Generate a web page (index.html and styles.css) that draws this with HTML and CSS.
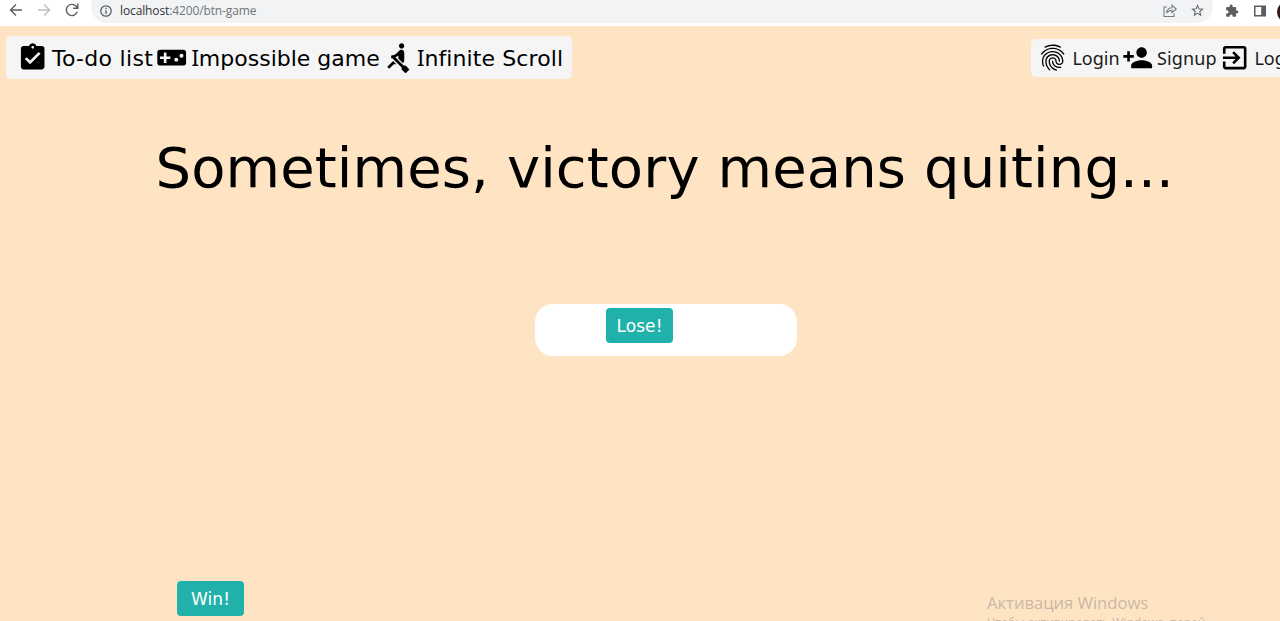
FILE: index.html
```html
<!DOCTYPE html>
<html lang="en">
<head>
<meta charset="utf-8">
<title>Impossible game</title>
<link rel="stylesheet" href="styles.css">
</head>
<body>
<div class="browser">
  <svg class="tool back" viewBox="0 0 16 16"><path d="M14 8H2.5M8 2.5L2.5 8L8 13.5"/></svg>
  <svg class="tool forward" viewBox="0 0 16 16"><path d="M2 8h11.500M8 2.500L13.500 8L8 13.500"/></svg>
  <svg class="tool reload" viewBox="0 0 16 16"><path d="M13.300 9.600A5.600 5.600 0 1 1 12 4.100L13.600 5.700M13.800 1.500v4.700H9.100"/></svg>
  <div class="address">
    <svg class="info" viewBox="0 0 14 14"><circle cx="7" cy="7" r="5.200"/><path d="M7 6.300v3.700M7 3.800v1.400"/></svg>
    <span class="url"><span class="host">localhost</span>:4200/btn-game</span>
    <svg class="share" viewBox="0 0 16 16"><path d="M5 4H2v9.500h10V10.500M4.500 10c.5-3.500 2.500-5.300 5.500-5.300V2.200L14.200 6L10 9.500V7.200C7.500 7.200 6 8 4.500 10z"/></svg>
    <svg class="star" viewBox="0 0 24 24"><path d="M22 9.240l-7.190-.62L12 2 9.190 8.630 2 9.240l5.460 4.730L5.820 21 12 17.270 18.180 21l-1.630-7.030L22 9.240zM12 15.400l-3.760 2.270 1-4.280-3.320-2.880 4.380-.38L12 6.100l1.710 4.040 4.380.38-3.320 2.880 1 4.280L12 15.400z"/></svg>
  </div>
  <svg class="puzzle" viewBox="0 0 24 24"><path d="M20.500 11H19V7c0-1.100-.9-2-2-2h-4V3.500a2.500 2.500 0 0 0-5 0V5H4c-1.100 0-2 .9-2 2v3.800h1.500a2.700 2.700 0 0 1 0 5.400H2V20c0 1.100.9 2 2 2h3.800v-1.500a2.700 2.700 0 0 1 5.400 0V22H17c1.100 0 2-.9 2-2v-4h1.500a2.500 2.500 0 0 0 0-5z"/></svg>
  <svg class="panel" viewBox="0 0 14 14"><path d="M1 1.500h12v11H1zM2.500 3v8h5.700V3z" fill-rule="evenodd"/></svg>
  <span class="avatar"></span>
</div>

<main class="page">
  <header class="header">
    <nav class="menu main-menu">
      <a class="link todo">
        <svg class="icon" viewBox="0 0 24 24"><path d="M19 3h-4.180C14.400 1.840 13.300 1 12 1c-1.300 0-2.400.84-2.820 2H5c-1.100 0-2 .9-2 2v14c0 1.100.9 2 2 2h14c1.100 0 2-.9 2-2V5c0-1.100-.9-2-2-2zm-7 0c.55 0 1 .45 1 1s-.45 1-1 1-1-.45-1-1 .45-1 1-1zm-2 14l-4-4 1.410-1.410L10 14.170l6.590-6.590L18 9l-8 8z"/></svg>
        <span class="label">To-do list</span>
      </a>
      <a class="link game">
        <svg class="icon" viewBox="0 0 24 24"><path d="M21 6H3c-1.100 0-2 .9-2 2v8c0 1.100.9 2 2 2h18c1.100 0 2-.9 2-2V8c0-1.100-.9-2-2-2zm-10 7H8v3H6v-3H3v-2h3V8h2v3h3v2zm4.500 2c-.83 0-1.500-.67-1.500-1.500s.67-1.500 1.500-1.500 1.500.67 1.500 1.500-.67 1.500-1.500 1.500zm4-3c-.83 0-1.500-.67-1.500-1.500S18.670 9 19.500 9s1.500.67 1.500 1.500-.67 1.500-1.500 1.500z"/></svg>
        <span class="label serif-cap">Impossible game</span>
      </a>
      <a class="link scroll">
        <svg class="icon" viewBox="0 0 24 24"><path d="M8.500 14.500L4 19l1.500 1.500L9 17h2l-2.500-2.500zM15 1c-1.100 0-2 .9-2 2s.9 2 2 2 2-.9 2-2-.9-2-2-2zm6 20.010L18 24l-2.990-3.010V19.500l-7.100-7.090c-.31.05-.61.07-.91.07v-2.160c1.660.03 3.610-.87 4.670-2.040l1.400-1.550c.19-.21.43-.38.69-.5.29-.14.62-.23.96-.23h.03C15.990 6.010 17 7.020 17 8.260v5.750c0 .84-.35 1.610-.92 2.160l-3.580-3.580v-2.270c-.63.52-1.430 1.020-2.290 1.390L16.500 18H18l3 3.010z"/></svg>
        <span class="label serif-cap">Infinite Scroll</span>
      </a>
    </nav>
    <nav class="menu user-menu">
      <a class="link login">
        <svg class="icon" viewBox="0 0 24 24"><path d="M17.810 4.470c-.08 0-.16-.02-.23-.06C15.660 3.420 14 3 12.010 3c-1.980 0-3.860.47-5.570 1.410-.24.13-.54.04-.68-.2-.13-.24-.04-.55.2-.68C7.820 2.520 9.860 2 12.010 2c2.130 0 3.990.47 6.030 1.520.25.13.34.43.21.67-.09.18-.26.28-.44.28zM3.500 9.720c-.1 0-.2-.03-.29-.09-.23-.16-.28-.47-.12-.7.99-1.400 2.250-2.500 3.750-3.270C9.980 4.040 14 4.030 17.150 5.650c1.500.77 2.760 1.860 3.750 3.250.16.22.11.54-.12.7-.23.16-.54.11-.7-.12-.9-1.260-2.040-2.250-3.390-2.940-2.870-1.470-6.540-1.470-9.400.01-1.360.7-2.500 1.700-3.400 2.960-.08.14-.23.21-.39.21zm6.250 12.070c-.13 0-.26-.05-.35-.15-.87-.87-1.340-1.430-2.010-2.640-.69-1.230-1.050-2.730-1.050-4.340 0-2.970 2.540-5.390 5.660-5.390s5.660 2.420 5.660 5.390c0 .28-.22.5-.5.5s-.5-.22-.5-.5c0-2.420-2.090-4.390-4.660-4.390-2.570 0-4.660 1.970-4.660 4.390 0 1.440.32 2.770.93 3.850.64 1.150 1.080 1.640 1.850 2.420.19.2.19.51 0 .71-.11.1-.24.15-.37.15zm7.170-1.850c-1.190 0-2.240-.3-3.100-.89-1.490-1.010-2.380-2.650-2.380-4.390 0-.28.22-.5.5-.5s.5.22.5.5c0 1.410.72 2.740 1.940 3.560.71.48 1.540.71 2.540.71.24 0 .64-.03 1.040-.1.27-.05.53.13.58.41.05.27-.13.53-.41.58-.57.11-1.070.12-1.210.12zM14.910 22c-.04 0-.09-.01-.13-.02-1.590-.44-2.630-1.030-3.720-2.100-1.400-1.390-2.170-3.240-2.170-5.220 0-1.620 1.380-2.940 3.080-2.940 1.700 0 3.080 1.320 3.080 2.940 0 1.070.93 1.940 2.080 1.940s2.080-.87 2.080-1.940c0-3.770-3.250-6.830-7.250-6.830-2.840 0-5.440 1.580-6.610 4.030-.39.81-.59 1.760-.59 2.800 0 .78.07 2.010.67 3.610.1.26-.03.55-.29.64-.26.1-.55-.04-.64-.29-.49-1.310-.73-2.610-.73-3.960 0-1.200.23-2.290.68-3.240 1.330-2.790 4.280-4.600 7.510-4.600 4.550 0 8.250 3.510 8.250 7.830 0 1.620-1.380 2.940-3.080 2.940s-3.080-1.320-3.080-2.940c0-1.070-.93-1.940-2.080-1.940s-2.080.87-2.080 1.940c0 1.710.66 3.310 1.870 4.510.95.94 1.860 1.460 3.270 1.850.27.07.42.35.35.61-.05.23-.26.38-.47.38z"/></svg>
        <span class="label">Login</span>
      </a>
      <a class="link signup">
        <svg class="icon" viewBox="0 0 24 24"><path d="M15 12c2.210 0 4-1.790 4-4s-1.790-4-4-4-4 1.790-4 4 1.790 4 4 4zm-9-2V7H4v3H1v2h3v3h2v-3h3v-2H6zm9 4c-2.670 0-8 1.340-8 4v2h16v-2c0-2.660-5.330-4-8-4z"/></svg>
        <span class="label">Signup</span>
      </a>
      <a class="link logout">
        <svg class="icon" viewBox="0 0 24 24"><path d="M10.090 15.590L11.500 17l5-5-5-5-1.410 1.410L12.670 11H3v2h9.670l-2.580 2.590zM19 3H5c-1.110 0-2 .9-2 2v4h2V5h14v14H5v-4H3v4c0 1.100.89 2 2 2h14c1.100 0 2-.9 2-2V5c0-1.100-.9-2-2-2z"/></svg>
        <span class="label">Logout</span>
      </a>
    </nav>
  </header>
  <h1 class="title">Sometimes, victory means quiting...</h1>
  <section class="tray"><button class="btn">Lose!</button></section>
  <button class="btn win">Win!</button>
  <aside class="activation">
    <p class="activation-title">Активация Windows</p>
    <p class="activation-text">Чтобы активировать Windows, перей</p>
  </aside>
</main>
</body>
</html>
```
FILE: styles.css
```css
* { box-sizing: border-box; }
body {
  margin: 0;
  height: 621px;
  overflow: hidden;
  display: flex;
  flex-direction: column;
  font-family: "DejaVu Sans", sans-serif;
  color: #000;
}
svg { display: block; flex: none; }

.browser {
  flex: none;
  height: 26px;
  padding: 0 0 3px 8px;
  display: flex;
  align-items: center;
  background: #fff;
  overflow: hidden;
}
.tool {
  width: 16px;
  height: 16px;
  margin-right: 12px;
  margin-top: -3px;
  fill: none;
  stroke: #5a5d61;
  stroke-width: 1.4;
}
.forward { stroke: #bbbdc0; }
.address {
  width: 1122px;
  height: 32px;
  flex: none;
  margin-top: -9px;
  margin-left: -1px;
  padding: 7px 8px 0 8px;
  display: flex;
  align-items: center;
  border-radius: 16px;
  background: #f1f3f4;
}
.info { width: 14px; height: 14px; fill: none; stroke: #5a5d61; stroke-width: 1.3; }
.url {
  flex: 1;
  margin-left: 7px;
  font: 12px/16px "Open Sans", sans-serif;
  letter-spacing: -0.12px;
  color: #707478;
}
.host { color: #303336; }
.share { width: 16px; height: 16px; margin-right: 12px; fill: none; stroke: #777a7e; stroke-width: 1.1; }
.star { width: 15px; height: 15px; fill: #5a5d61; }
.puzzle { width: 14px; height: 14px; margin: -1px 0 0 12px; fill: #5a5d61; }
.panel { width: 14px; height: 14px; margin: -1px 0 0 14px; fill: #5a5d61; }
.avatar { flex: none; width: 22px; height: 22px; margin-left: 10px; border-radius: 50%; background: #351812; }

.page {
  flex: 1;
  min-height: 0;
  position: relative;
  display: flex;
  flex-direction: column;
  background: #ffe4c4;
}
.header {
  flex: none;
  height: 64px;
  padding: 10px 0 0 6px;
  display: flex;
  justify-content: space-between;
  align-items: flex-start;
}
.menu {
  display: flex;
  align-items: center;
  border-radius: 5px;
  background: #f5f5f5;
}
.main-menu {
  width: 566px;
  height: 43px;
  padding-left: 11px;
  font-size: 22px;
  font-variant-ligatures: none;
}
.user-menu {
  width: 249.500px;
  height: 38px;
  margin-top: 3px;
  padding-left: 6.500px;
  border-radius: 5px 0 0 5px;
  overflow: hidden;
  font-family: "Noto Sans", sans-serif;
  font-size: 18px;
  color: #1a1a1a;
}
.icon { fill: #000; }
.link { display: flex; align-items: center; flex: none; white-space: nowrap; }
.icon { width: 31.400px; height: 31.400px; }
.label { display: block; line-height: 30px; }
.todo { width: 139px; }
.game { width: 225.500px; }
.main-menu .label { margin-left: 4px; }
.main-menu .todo .label { padding-top: 3px; margin-left: 3.500px; letter-spacing: 0.3px; }
.scroll .label { letter-spacing: 0.1px; }
.serif-cap::first-letter { font-family: "Noto Sans", sans-serif; }
.login { width: 84.500px; }
.signup { width: 97.500px; }
.login .label { margin-left: 4px; }
.signup .label { margin-left: 4px; letter-spacing: 0.15px; }
.logout .label { margin-left: 4px; }

.title {
  margin: 43px 0 0 155.500px;
  font-size: 56px;
  font-weight: 400;
  line-height: 70px;
  letter-spacing: 0.12px;
  white-space: nowrap;
}
.tray {
  width: 262px;
  height: 52px;
  margin: 101px 0 0 535px;
  padding: 4px 0 0 71px;
  border-radius: 18px;
  background: #fff;
}
.btn {
  display: block;
  width: 67px;
  height: 35px;
  padding: 2px 0 0;
  border: 0;
  border-radius: 4px;
  background: #20b2aa;
  color: #fff;
  font: 17px/33px "DejaVu Sans", sans-serif;
  letter-spacing: 0.1px;
}
.win { margin: 225px 0 0 177px; }
.activation {
  position: absolute;
  left: 987px;
  top: 565px;
  white-space: nowrap;
  font-family: "Open Sans", sans-serif;
  color: #c9b8a5;
}
.activation p { margin: 0; }
.activation-title { font-size: 16.600px; line-height: 23px; }
.activation-text { font-size: 12px; line-height: 18px; }
```
